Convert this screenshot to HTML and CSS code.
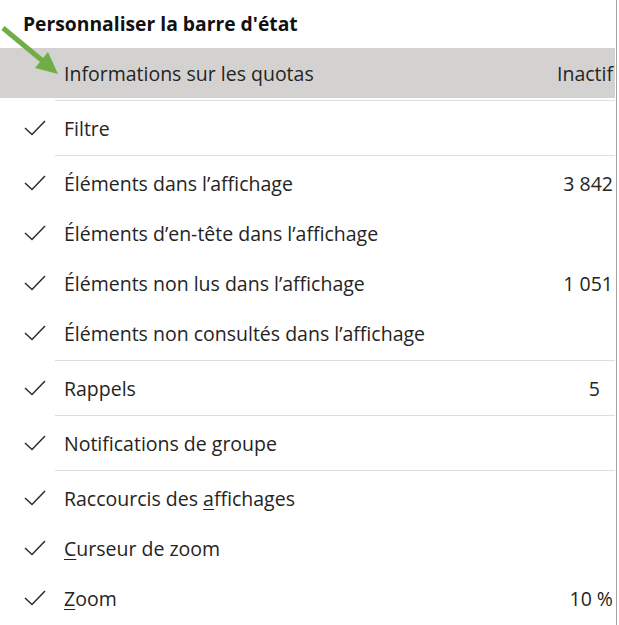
FILE: index.html
```html
<!DOCTYPE html>
<html lang="fr">
<head>
<meta charset="utf-8">
<title>Personnaliser la barre d'état</title>
<link rel="stylesheet" href="styles.css">
</head>
<body>
<div class="panel">
  <div class="title">Personnaliser la barre d'état</div>

  <div class="group">
    <div class="row active">
      <span class="check"></span>
      <span class="label">Informations sur les quotas</span>
      <span class="value">Inactif</span>
    </div>
  </div>

  <div class="group">
    <div class="row">
      <span class="check"><svg viewBox="0 0 22 16" width="22" height="16"><path d="M1 8 L8 14.5 L21 1"/></svg></span>
      <span class="label">Filtre</span>
    </div>
  </div>

  <div class="group">
    <div class="row">
      <span class="check"><svg viewBox="0 0 22 16" width="22" height="16"><path d="M1 8 L8 14.5 L21 1"/></svg></span>
      <span class="label">Éléments dans l’affichage</span>
      <span class="value">3 842</span>
    </div>
    <div class="row">
      <span class="check"><svg viewBox="0 0 22 16" width="22" height="16"><path d="M1 8 L8 14.5 L21 1"/></svg></span>
      <span class="label">Éléments d’en-tête dans l’affichage</span>
    </div>
    <div class="row">
      <span class="check"><svg viewBox="0 0 22 16" width="22" height="16"><path d="M1 8 L8 14.5 L21 1"/></svg></span>
      <span class="label">Éléments non lus dans l’affichage</span>
      <span class="value">1 051</span>
    </div>
    <div class="row">
      <span class="check"><svg viewBox="0 0 22 16" width="22" height="16"><path d="M1 8 L8 14.5 L21 1"/></svg></span>
      <span class="label">Éléments non consultés dans l’affichage</span>
    </div>
  </div>

  <div class="group">
    <div class="row">
      <span class="check"><svg viewBox="0 0 22 16" width="22" height="16"><path d="M1 8 L8 14.5 L21 1"/></svg></span>
      <span class="label">Rappels</span>
      <span class="value value-inset">5</span>
    </div>
  </div>

  <div class="group">
    <div class="row">
      <span class="check"><svg viewBox="0 0 22 16" width="22" height="16"><path d="M1 8 L8 14.5 L21 1"/></svg></span>
      <span class="label">Notifications de groupe</span>
    </div>
  </div>

  <div class="group">
    <div class="row">
      <span class="check"><svg viewBox="0 0 22 16" width="22" height="16"><path d="M1 8 L8 14.5 L21 1"/></svg></span>
      <span class="label">Raccourcis des <u>a</u>ffichages</span>
    </div>
    <div class="row">
      <span class="check"><svg viewBox="0 0 22 16" width="22" height="16"><path d="M1 8 L8 14.5 L21 1"/></svg></span>
      <span class="label"><u>C</u>urseur de zoom</span>
    </div>
    <div class="row">
      <span class="check"><svg viewBox="0 0 22 16" width="22" height="16"><path d="M1 8 L8 14.5 L21 1"/></svg></span>
      <span class="label"><u>Z</u>oom</span>
      <span class="value">10 %</span>
    </div>
  </div>

  <svg class="arrow" viewBox="0 0 70 80" width="70" height="80">
    <line x1="3" y1="28" x2="44" y2="62"/>
    <polygon points="58,74 35,68 48,52"/>
  </svg>
</div>
</body>
</html>
```

FILE: styles.css
```css
html, body {
  margin: 0;
  padding: 0;
  background: #ffffff;
}

body {
  font-family: "Open Sans", "Noto Sans", sans-serif;
  color: #252423;
}

.panel {
  position: relative;
  width: 615px;
  padding-right: 1px;
  border-right: 1px solid #a3a3a3;
  overflow: hidden;
}

.title {
  height: 34px;
  padding: 12px 0 0 23px;
  font-size: 19.3px;
  font-weight: 700;
  line-height: 24px;
  color: #111111;
}

.group {
  padding: 2px 0;
}

.group + .group::before {
  content: "";
  display: block;
  height: 1px;
  margin: -2px 0 2px 55px;
  background: #dedede;
}

.group:last-of-type::after {
  content: "";
  display: block;
  height: 1px;
  margin: 2px 0 -2px 55px;
  background: #dedede;
}

.row {
  display: flex;
  align-items: center;
  height: 50px;
  font-size: 19.5px;
}

.row.active {
  background: #d4d2d0;
}

.check {
  flex: none;
  width: 40px;
  padding-left: 24px;
  display: flex;
  align-items: center;
}

.check svg {
  fill: none;
  stroke: #2b2b2b;
  stroke-width: 1.5;
}

.label {
  flex: 1;
  white-space: nowrap;
}

.label u {
  text-decoration-thickness: 1px;
  text-underline-offset: 3px;
}

.value {
  padding-right: 2px;
  white-space: nowrap;
}

.value-inset {
  padding-right: 15px;
}

.arrow {
  position: absolute;
  left: 0;
  top: 0;
  pointer-events: none;
}

.arrow line {
  stroke: #70ad47;
  stroke-width: 5;
}

.arrow polygon {
  fill: #70ad47;
}
```
